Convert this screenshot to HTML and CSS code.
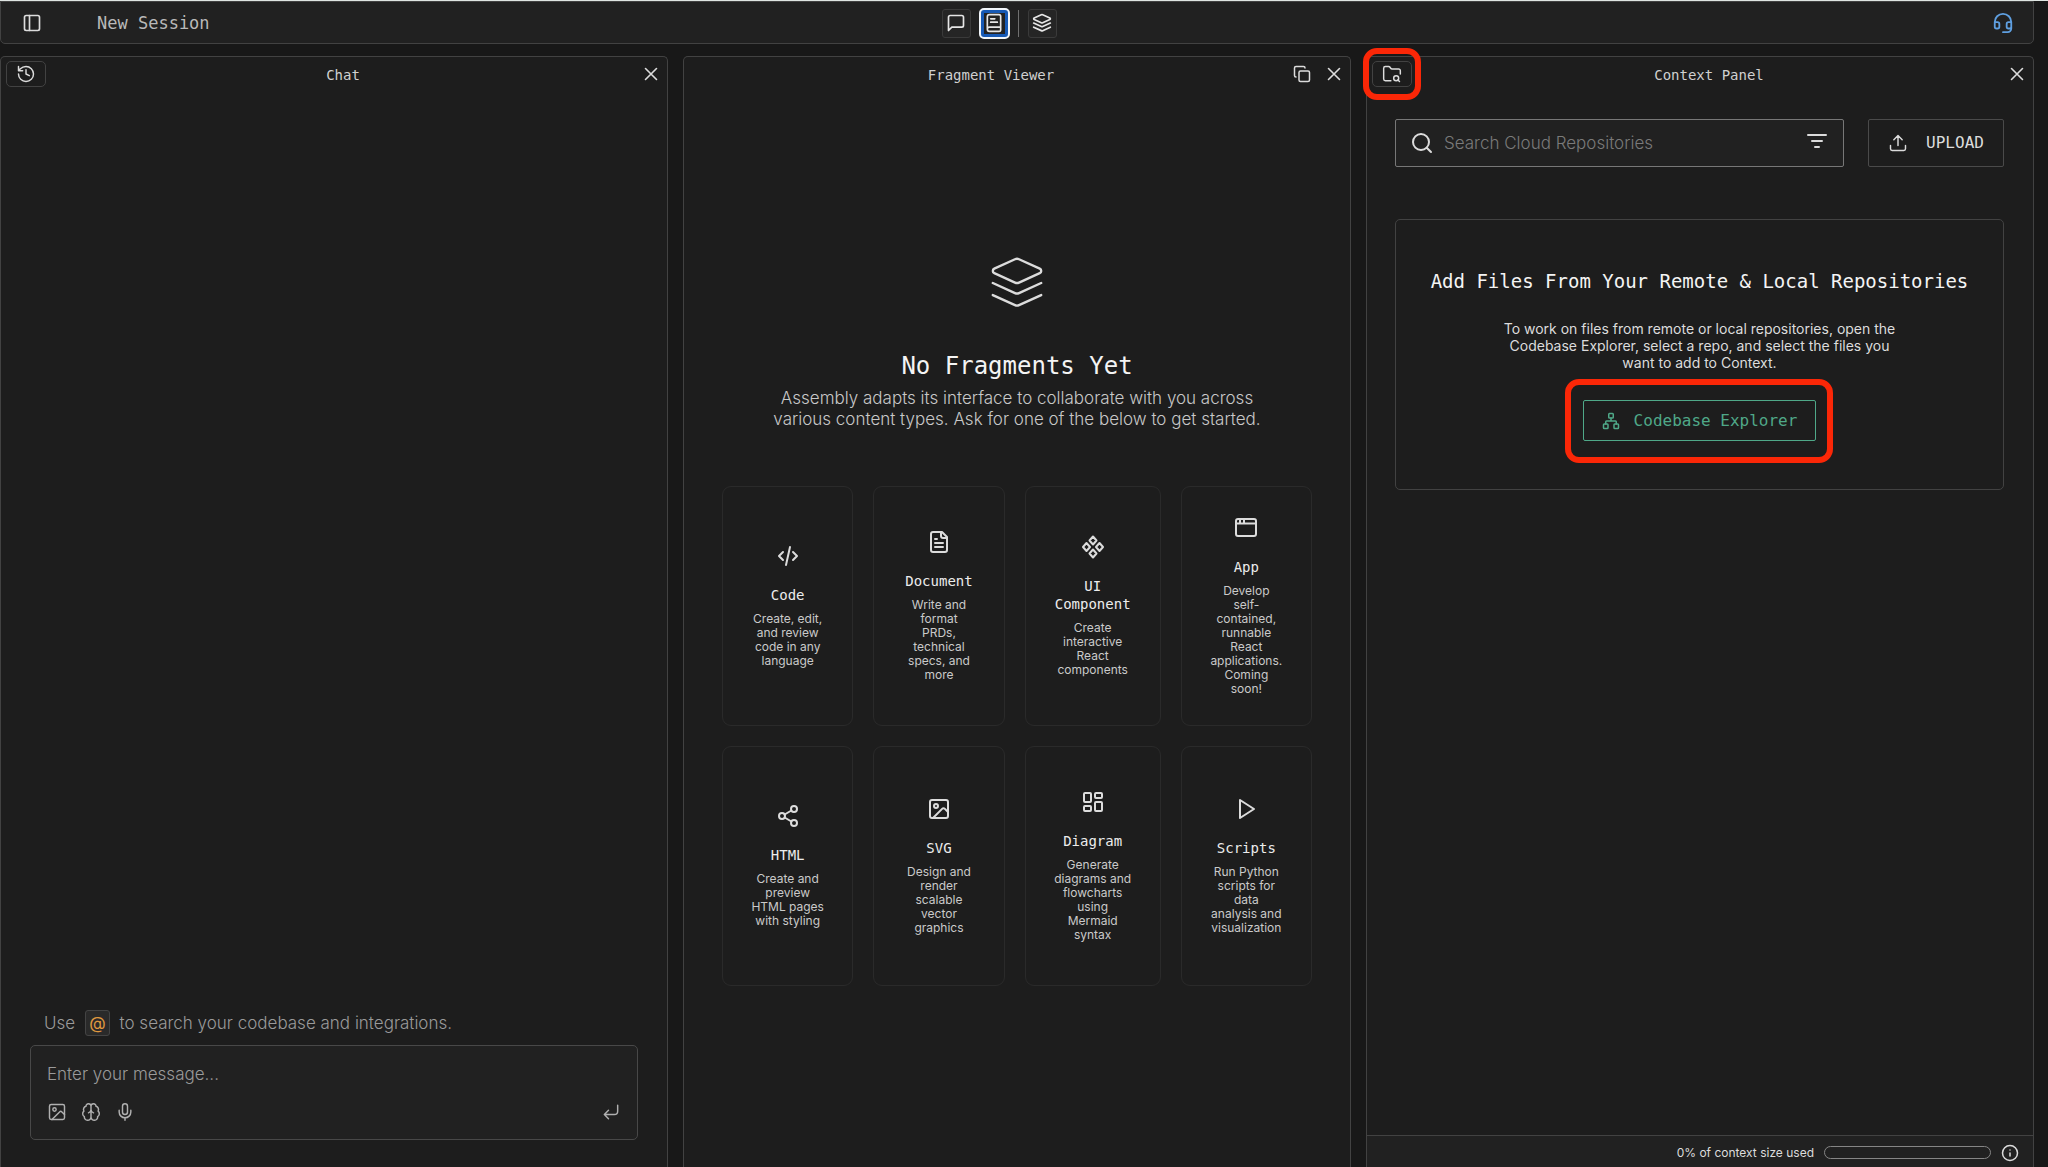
FILE: index.html
```html
<!DOCTYPE html>
<html lang="en">
<head>
<meta charset="utf-8">
<title>New Session</title>
<link rel="stylesheet" href="styles.css">
</head>
<body>
<div class="app">
  <header class="topbar">
    <div class="topbar-side">
      <button class="plain" aria-label="Toggle sidebar"><svg class="icon s20" viewBox="0 0 24 24"><rect x="3" y="3" width="18" height="18" rx="2"/><path d="M9 3v18"/></svg></button>
      <h1 class="session">New Session</h1>
    </div>
    <nav class="views" aria-label="Views">
      <button class="view" aria-label="Chat"><svg class="icon s20" viewBox="0 0 24 24"><path d="M21 15a2 2 0 0 1-2 2H7l-4 4V5a2 2 0 0 1 2-2h14a2 2 0 0 1 2 2z"/></svg></button>
      <button class="view active" aria-label="Fragments"><svg class="icon s20" viewBox="0 0 24 24"><path d="M4 19V4.500A2.500 2.500 0 0 1 6.500 2H18a2 2 0 0 1 2 2v16a2 2 0 0 1-2 2H6.500A2.500 2.500 0 0 1 4 19.500a2.500 2.500 0 0 1 2.500-2.500H20M8 7h5M8 11h8"/></svg></button>
      <span class="divider"></span>
      <button class="view" aria-label="Context"><svg class="icon s20" viewBox="0 0 24 24"><path d="M12.830 2.180a2 2 0 0 0-1.660 0L2.600 6.080a1 1 0 0 0 0 1.830l8.580 3.910a2 2 0 0 0 1.660 0l8.580-3.900a1 1 0 0 0 0-1.830zM2 12l9.170 4.160a2 2 0 0 0 1.660 0L22 12M2 17l9.170 4.160a2 2 0 0 0 1.660 0L22 17"/></svg></button>
    </nav>
    <div class="topbar-side end">
      <button class="plain support" aria-label="Support"><svg class="icon s22" viewBox="0 0 24 24"><path d="M3 11h3a2 2 0 0 1 2 2v3a2 2 0 0 1-2 2H5a2 2 0 0 1-2-2v-5a9 9 0 0 1 18 0v5a2 2 0 0 1-2 2h-1a2 2 0 0 1-2-2v-3a2 2 0 0 1 2-2h3M21 16v2a4 4 0 0 1-4 4h-5"/></svg></button>
    </div>
  </header>

  <main class="panels">
    <section class="panel">
      <div class="panel-head">
        <button class="tool" aria-label="History"><svg class="icon s20 thin" viewBox="0 0 24 24"><path d="M3 12a9 9 0 1 0 9-9 9.750 9.750 0 0 0-6.740 2.740L3 8M3 3v5h5M12 7v5l4 2"/></svg></button>
        <h2>Chat</h2>
        <button class="plain" aria-label="Close chat"><svg class="icon s22 thin" viewBox="0 0 24 24"><path d="M18 6 6 18M6 6l12 12"/></svg></button>
      </div>
      <div class="chat">
        <p class="hint">Use <kbd>@</kbd> to search your codebase and integrations.</p>
        <form class="composer">
          <textarea rows="1" aria-label="Message" placeholder="Enter your message..."></textarea>
          <div class="composer-tools">
            <button type="button" class="plain" aria-label="Add image"><svg class="icon s20 thin" viewBox="0 0 24 24"><rect x="3" y="3" width="18" height="18" rx="2"/><circle cx="9" cy="9" r="2"/><path d="m21 15-3.100-3.100a2 2 0 0 0-2.800 0L6 21"/></svg></button>
            <button type="button" class="plain" aria-label="Reasoning"><svg class="icon s20 thin" viewBox="0 0 24 24"><path d="M12 5a3 3 0 1 0-6 .12 4 4 0 0 0-2.530 5.770 4 4 0 0 0 .560 6.590A4 4 0 1 0 12 18zM12 5a3 3 0 1 1 6 .12 4 4 0 0 1 2.530 5.770 4 4 0 0 1-.560 6.590A4 4 0 1 1 12 18zM15 13a4.500 4.500 0 0 1-3-4 4.500 4.500 0 0 1-3 4"/></svg></button>
            <button type="button" class="plain" aria-label="Dictate"><svg class="icon s20 thin" viewBox="0 0 24 24"><rect x="9" y="2" width="6" height="13" rx="3"/><path d="M19 10v2a7 7 0 0 1-14 0v-2M12 19v3"/></svg></button>
            <button class="plain send" aria-label="Send"><svg class="icon s20 thin" viewBox="0 0 24 24"><path d="m9 10-5 5 5 5M20 4v7a4 4 0 0 1-4 4H4"/></svg></button>
          </div>
        </form>
      </div>
    </section>

    <section class="panel">
      <div class="panel-head">
        <h2>Fragment Viewer</h2>
        <button class="plain" aria-label="Copy"><svg class="icon s18" viewBox="0 0 24 24"><rect x="8" y="8" width="14" height="14" rx="2"/><path d="M4 16a2 2 0 0 1-2-2V4a2 2 0 0 1 2-2h10a2 2 0 0 1 2 2"/></svg></button>
        <button class="plain" aria-label="Close fragment viewer"><svg class="icon s22 thin" viewBox="0 0 24 24"><path d="M18 6 6 18M6 6l12 12"/></svg></button>
      </div>
      <div class="fragments">
        <svg class="icon hero" viewBox="0 0 24 24"><path d="M12.830 2.180a2 2 0 0 0-1.660 0L2.600 6.080a1 1 0 0 0 0 1.830l8.580 3.910a2 2 0 0 0 1.660 0l8.580-3.900a1 1 0 0 0 0-1.830zM2 12l9.170 4.160a2 2 0 0 0 1.660 0L22 12M2 17l9.170 4.160a2 2 0 0 0 1.660 0L22 17"/></svg>
        <h3>No Fragments Yet</h3>
        <p class="lead">Assembly adapts its interface to collaborate with you across various content types. Ask for one of the below to get started.</p>
        <div class="cards">
          <article class="card"><svg class="icon s24" viewBox="0 0 24 24"><path d="m17 8 4 4-4 4M7 8l-4 4 4 4M14 3l-4 18"/></svg><h4>Code</h4><p>Create, edit, and review code in any language</p></article>
          <article class="card"><svg class="icon s24" viewBox="0 0 24 24"><path d="M15 2H6a2 2 0 0 0-2 2v16a2 2 0 0 0 2 2h12a2 2 0 0 0 2-2V7zM14 2v4a2 2 0 0 0 2 2h4M10 9H8M16 13H8M16 17H8"/></svg><h4>Document</h4><p>Write and format PRDs, technical specs, and more</p></article>
          <article class="card"><svg class="icon s24" viewBox="0 0 24 24"><path d="m12 1.500 3.500 4-3.500 4-3.500-4zM12 14.500l3.500 4-3.500 4-3.500-4zM5.500 8 9 12l-3.500 4L2 12zM18.500 8l3.500 4-3.500 4-3.500-4z"/></svg><h4>UI Component</h4><p>Create interactive React components</p></article>
          <article class="card"><svg class="icon s24" viewBox="0 0 24 24"><rect x="2" y="3" width="20" height="17" rx="2"/><path d="M2 7.500h20M6 3v4M10 3v4"/></svg><h4>App</h4><p>Develop self-contained, runnable React applications. Coming soon!</p></article>
          <article class="card"><svg class="icon s24" viewBox="0 0 24 24"><circle cx="18" cy="5" r="3"/><circle cx="6" cy="12" r="3"/><circle cx="18" cy="19" r="3"/><path d="m8.600 13.500 6.800 4M15.400 6.500l-6.800 4"/></svg><h4>HTML</h4><p>Create and preview HTML pages with styling</p></article>
          <article class="card"><svg class="icon s24" viewBox="0 0 24 24"><rect x="3" y="3" width="18" height="18" rx="2"/><circle cx="9" cy="9" r="2"/><path d="m21 15-3.100-3.100a2 2 0 0 0-2.800 0L6 21"/></svg><h4>SVG</h4><p>Design and render scalable vector graphics</p></article>
          <article class="card"><svg class="icon s24" viewBox="0 0 24 24"><rect x="3" y="3" width="7" height="9" rx="1"/><rect x="14" y="3" width="7" height="5" rx="1"/><rect x="14" y="12" width="7" height="9" rx="1"/><rect x="3" y="16" width="7" height="5" rx="1"/></svg><h4>Diagram</h4><p>Generate diagrams and flowcharts using Mermaid syntax</p></article>
          <article class="card"><svg class="icon s24" viewBox="0 0 24 24"><path d="m6 3 14 9-14 9z"/></svg><h4>Scripts</h4><p>Run Python scripts for data analysis and visualization</p></article>
        </div>
      </div>
    </section>

    <section class="panel">
      <div class="panel-head">
        <div class="callout callout-tool">
          <button class="tool" aria-label="Browse repositories"><svg class="icon s20 thin" viewBox="0 0 24 24"><path d="M10.700 20H4a2 2 0 0 1-2-2V5a2 2 0 0 1 2-2h3.900a2 2 0 0 1 1.690.9l.81 1.200a2 2 0 0 0 1.670.9H20a2 2 0 0 1 2 2v4.100M21 21l-1.900-1.900"/><circle cx="17" cy="17" r="3"/></svg></button>
        </div>
        <h2>Context Panel</h2>
        <button class="plain" aria-label="Close context panel"><svg class="icon s22 thin" viewBox="0 0 24 24"><path d="M18 6 6 18M6 6l12 12"/></svg></button>
      </div>
      <div class="context">
        <div class="search-row">
          <div class="search">
            <svg class="icon s24" viewBox="0 0 24 24"><circle cx="11" cy="11" r="8"/><path d="m21 21-4.300-4.300"/></svg>
            <input type="search" aria-label="Search Cloud Repositories" placeholder="Search Cloud Repositories">
            <button class="plain" aria-label="Filter"><svg class="icon s24" viewBox="0 0 24 24"><path d="M3 4h18M7 10h10M10 16h4"/></svg></button>
          </div>
          <button class="upload"><svg class="icon s20 thin" viewBox="0 0 24 24"><path d="M21 15v4a2 2 0 0 1-2 2H5a2 2 0 0 1-2-2v-4M17 8l-5-5-5 5M12 3v12"/></svg>UPLOAD</button>
        </div>
        <div class="repos">
          <h3>Add Files From Your Remote &amp; Local Repositories</h3>
          <p>To work on files from remote or local repositories, open the Codebase Explorer, select a repo, and select the files you want to add to Context.</p>
          <div class="callout callout-explorer">
            <button class="explorer"><svg class="icon s18" viewBox="0 0 24 24"><rect x="9" y="2" width="6" height="6" rx="1"/><rect x="2" y="16" width="6" height="6" rx="1"/><rect x="16" y="16" width="6" height="6" rx="1"/><path d="M5 16v-3a1 1 0 0 1 1-1h12a1 1 0 0 1 1 1v3M12 12V8"/></svg>Codebase Explorer</button>
          </div>
        </div>
      </div>
      <footer class="usage">
        <label for="usage">0% of context size used</label>
        <progress id="usage" max="100" value="0"></progress>
        <button class="plain" aria-label="About context size"><svg class="icon s18" viewBox="0 0 24 24"><circle cx="12" cy="12" r="10"/><path d="M12 16v-4M12 8h.010"/></svg></button>
      </footer>
    </section>
  </main>
</div>
</body>
</html>
```
FILE: styles.css
```css
* { box-sizing: border-box; }

:root {
  --line: #424242;
  --surface: #1d1d1d;
  --raised: #212121;
  --mono: "DejaVu Sans Mono", "Liberation Mono", monospace;
  --sans: Inter, "Liberation Sans", sans-serif;
}

body {
  margin: 0;
  background: #181818;
  color: #dcdcdc;
  font-family: var(--sans);
}

h1, h2, h3, h4, p { margin: 0; font-weight: 400; }
button { font: inherit; color: inherit; cursor: pointer; }

.icon {
  display: block;
  flex: none;
  fill: none;
  stroke: currentColor;
  stroke-width: 2;
  stroke-linecap: round;
  stroke-linejoin: round;
}
.thin { stroke-width: 1.75; }
.s18 { width: 18px; height: 18px; }
.s20 { width: 20px; height: 20px; }
.s22 { width: 22px; height: 22px; }
.s24 { width: 24px; height: 24px; }

.plain { display: flex; padding: 0; border: 0; background: none; }

.app {
  display: flex;
  flex-direction: column;
  gap: 12px;
  height: 100vh;
  padding-right: 14px;
  overflow: hidden;
  border-top: 1px solid #dfe5e2;
}

/* Top bar */
.topbar {
  display: grid;
  grid-template-columns: 1fr auto 1fr;
  align-items: center;
  height: 43px;
  padding: 1px 19px 0 21px;
  border: 1px solid var(--line);
  border-radius: 0 0 5px 5px;
  background: var(--raised);
}
.topbar-side { display: flex; align-items: center; gap: 55px; }
.end { justify-content: flex-end; }
.session { color: #b9b9b9; font: 17px/22px var(--mono); }
.support { color: #5f9fe0; }

.views { display: flex; align-items: center; gap: 9px; margin-right: 38px; }
.view {
  display: flex;
  align-items: center;
  justify-content: center;
  width: 29px;
  height: 29px;
  padding: 0;
  border: 1px solid #3a3a3a;
  border-radius: 3px;
  background: #252525;
  color: #e6e6e6;
}
.view.active {
  border: 4px solid #1659b5;
  border-radius: 4px;
  background: #222;
  outline: 2px solid #f2f6fa;
  outline-offset: -1px;
}
.divider { width: 1px; height: 27px; background: #707070; }

/* Panels */
.panels {
  display: grid;
  grid-template-columns: repeat(3, minmax(0, 1fr));
  gap: 15px;
  flex: 1;
  min-height: 0;
}
.panel {
  display: flex;
  flex-direction: column;
  min-height: 0;
  border: 1px solid var(--line);
  border-bottom: 0;
  border-radius: 5px 5px 0 0;
  background: var(--surface);
}
.panel-head {
  display: flex;
  align-items: center;
  height: 34px;
  padding: 0 5px;
}
.panel-head h2 {
  flex: 1;
  padding-top: 2px;
  color: #d0d0d0;
  font: 14px/18px var(--mono);
  text-align: center;
}
.panel-head .plain + .plain { margin-left: 12px; }
.tool {
  display: flex;
  align-items: center;
  justify-content: center;
  width: 40px;
  height: 26px;
  padding: 0;
  border: 1px solid var(--line);
  border-radius: 5px;
  background: none;
}

/* Chat */
.chat {
  display: flex;
  flex: 1;
  flex-direction: column;
  justify-content: flex-end;
  gap: 9px;
  padding: 0 29px 27px;
}
.hint {
  display: flex;
  align-items: center;
  gap: 10px;
  padding-left: 14px;
  color: #9a9a9a;
  font-size: 17px;
  font-weight: 300;
  line-height: 26px;
}
kbd {
  padding: 0 3px;
  border: 1px solid #444;
  border-radius: 3px;
  background: #2a2a2a;
  color: #e0993f;
  font: 17px/24px var(--sans);
}
.composer {
  display: flex;
  flex-direction: column;
  gap: 16px;
  padding: 16px 16px 17px;
  border: 1px solid #484848;
  border-radius: 5px;
  background: var(--raised);
  color: #b0b0b0;
}
.composer textarea {
  height: 24px;
  padding: 0;
  border: 0;
  outline: 0;
  resize: none;
  background: none;
  color: #dcdcdc;
  font: 300 17px/24px var(--sans);
}
.composer textarea::placeholder { color: #9a9a9a; }
.composer-tools { display: flex; gap: 14px; }
.send { margin-left: auto; }

/* Fragment viewer */
.fragments {
  display: flex;
  flex-direction: column;
  align-items: center;
  padding: 163px 38px 0;
  text-align: center;
}
.hero { width: 58px; height: 58px; stroke-width: 1; }
.fragments h3 {
  margin-top: 39px;
  color: #f4f4f4;
  font: 24px/30px var(--mono);
}
.lead {
  max-width: 500px;
  margin-top: 7px;
  color: #c8c8c8;
  font-size: 17px;
  font-weight: 300;
  line-height: 21px;
}
.cards {
  display: grid;
  grid-template-columns: 1fr 1fr 136px 1fr;
  grid-auto-rows: 1fr;
  gap: 20px;
  align-self: stretch;
  margin-top: 56px;
}
.card {
  display: flex;
  flex-direction: column;
  align-items: center;
  justify-content: center;
  padding: 29px 28px;
  border: 1px solid #2a2a2a;
  border-radius: 9px;
}
.card h4 {
  margin-top: 18px;
  color: #ececec;
  font: 14px/18px var(--mono);
}
.card p {
  margin-top: 8px;
  color: #cacaca;
  font-size: 12px;
  line-height: 14px;
}

/* Context panel */
.context {
  display: flex;
  flex: 1;
  flex-direction: column;
  gap: 52px;
  padding: 28px 29px 0 28px;
}
.search-row { display: flex; gap: 24px; }
.search {
  display: flex;
  flex: 1;
  align-items: center;
  gap: 10px;
  height: 48px;
  padding: 0 14px;
  border: 1px solid #777;
  border-radius: 2px;
  background: var(--raised);
}
.search input {
  flex: 1;
  min-width: 0;
  padding: 0;
  border: 0;
  outline: 0;
  background: none;
  color: #dcdcdc;
  font: 300 17px/24px var(--sans);
}
.search input::placeholder { color: #7a7a7a; }
.upload {
  display: flex;
  align-items: center;
  justify-content: center;
  gap: 18px;
  width: 136px;
  border: 1px solid #4a4a4a;
  border-radius: 2px;
  background: none;
  font: 16px/20px var(--mono);
}
.repos {
  display: flex;
  flex-direction: column;
  align-items: center;
  padding: 48px 16px;
  border: 1px solid var(--line);
  border-radius: 5px;
  text-align: center;
}
.repos h3 {
  color: #f4f4f4;
  font: 19px/26px var(--mono);
}
.repos p {
  max-width: 410px;
  margin: 26px 0 29px;
  font-size: 14px;
  line-height: 17px;
}
.explorer {
  display: flex;
  align-items: center;
  gap: 14px;
  height: 41px;
  padding: 0 18px;
  border: 1px solid #4fa888;
  border-radius: 2px;
  background: none;
  color: #4fa888;
  font: 16px/20px var(--mono);
}

/* Red markers drawn over the highlighted controls */
.callout { position: relative; }
.callout::after {
  position: absolute;
  border: 6px solid #fb2707;
  border-radius: 14px;
  content: "";
  pointer-events: none;
}
.callout-tool::after { inset: -13px -9px; }
.callout-explorer::after { inset: -21px -17px -22px -18px; }

.usage {
  display: flex;
  align-items: center;
  justify-content: flex-end;
  gap: 10px;
  height: 32px;
  padding: 2px 14px 0 0;
  border-top: 1px solid var(--line);
  background: var(--raised);
  font-size: 12px;
  line-height: 16px;
}
.usage progress {
  width: 167px;
  height: 13px;
  border: 1px solid #858585;
  border-radius: 7px;
  appearance: none;
  background: none;
}
.usage progress::-webkit-progress-bar { background: none; }
```
